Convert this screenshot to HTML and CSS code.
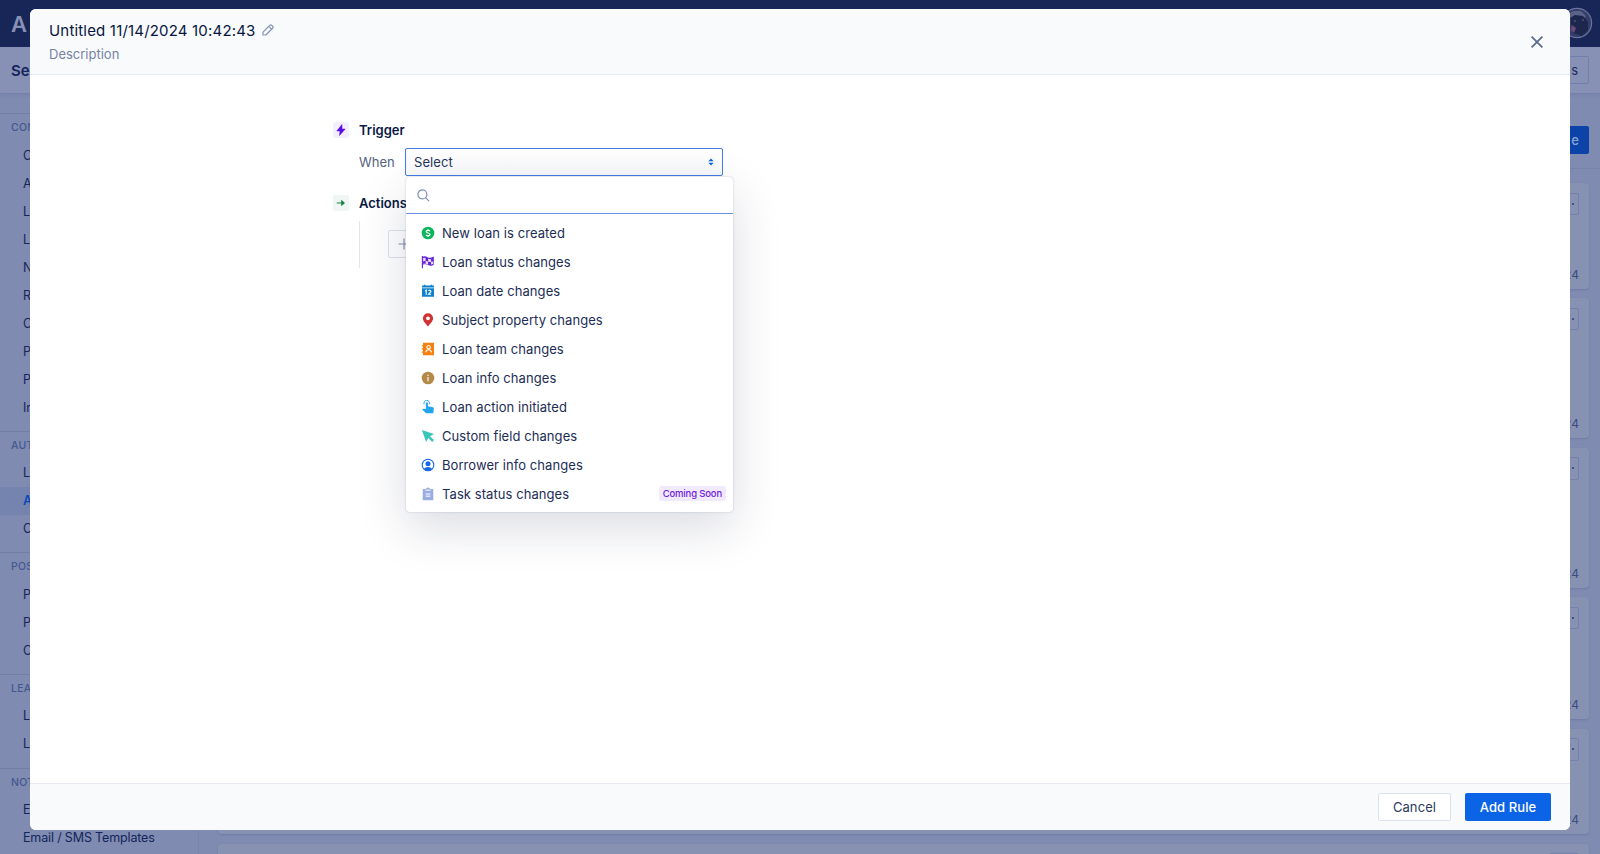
FILE: index.html
```
<!DOCTYPE html>
<html lang="en">
  <head>
    <title>Add Rule</title>
    <meta charset="utf-8" />
    <link rel="stylesheet" href="styles.css">
  </head>
  <body>
    <div class="app">
      <header class="topbar">
        <div class="logo">A</div>
        <svg class="avatar" viewBox="0 0 32 32">
          <circle cx="16" cy="16" r="14.6" fill="#343d67" stroke="#69759f" stroke-width="1.2" />
          <path d="M8 7l4-3 8 0 5 5-2 3-4-3-7 1-4 6z" fill="#59638a" />
          <path d="M9 11l5-3 8 1 5 6 0 8-6 6-9-3z" fill="#1d264d" />
          <path d="M13 14h2M21 13h2" stroke="#5d688f" fill="none" />
          <path d="M11 18l4 3-2 5-3-3z" fill="#704a76" />
        </svg>
      </header>
      <div class="subbar">
        <div class="subbar-title">Se</div>
        <button class="ghost-button">s</button>
      </div>
      <div class="page">
        <nav class="sidebar">
          <section>
            <h4>CON</h4>
            <a>C</a><a>A</a><a>L</a><a>L</a><a>N</a><a>R</a><a>C</a><a>P</a><a>P</a><a>In</a>
          </section>
          <section>
            <h4>AUT</h4>
            <a>L</a><a class="active">A</a><a>C</a>
          </section>
          <section>
            <h4>POS</h4>
            <a>P</a><a>P</a><a>C</a>
          </section>
          <section>
            <h4>LEA</h4>
            <a>L</a><a>L</a>
          </section>
          <section>
            <h4>NOT</h4>
            <a>E</a><a>Email / SMS Templates</a>
          </section>
        </nav>
        <main class="content">
          <div class="toolbar"><button class="create-button">e</button></div>
          <div class="rules">
            <div class="rule rule-short"><span class="more"></span><span>24</span></div>
            <div class="rule rule-tall"><span class="more"></span><span>24</span></div>
            <div class="rule rule-tall"><span class="more"></span><span>24</span></div>
            <div class="rule rule-mid"><span class="more"></span><span>24</span></div>
            <div class="rule rule-short"><span class="more"></span><span>24</span></div>
            <div class="rule rule-short"><span class="more"></span></div>
          </div>
        </main>
      </div>
    </div>

    <div class="modal">
      <div class="modal-header">
        <div>
          <div class="modal-title">
            <span>Untitled 11/14/2024 10:42:43</span>
            <svg width="12" height="12" viewBox="0 0 12 12" fill="none" stroke="#8292b5" stroke-width="1.2" stroke-linejoin="round">
              <path d="M1 8.2L8 1.2Q8.7.5 9.5 1.2L10.8 2.5Q11.5 3.3 10.8 4L3.8 11H1zM6.8 2.4l2.8 2.8" />
            </svg>
          </div>
          <div class="modal-description">Description</div>
        </div>
        <svg class="close" width="12" height="12" viewBox="0 0 12 12" stroke="#5b6b8c" stroke-width="1.8">
          <path d="M.6.6l10.8 10.8M11.4.6L.6 11.4" />
        </svg>
      </div>

      <div class="modal-body">
        <div class="step">
          <span class="step-icon trigger-icon">
            <svg width="10" height="12" viewBox="0 0 10 12"><path d="M6 .5L.8 7H4L3.5 11.5 9.2 5H6z" fill="#5a0be0" stroke="#5a0be0" stroke-width=".5" /></svg>
          </span>
          <h3>Trigger</h3>
        </div>
        <div class="when">
          <label>When</label>
          <div class="select">
            <span>Select</span>
            <svg width="6" height="8" viewBox="0 0 6 8" fill="#0b5fe6"><path d="M3 .4L5.6 3.2H.4zM3 7.6L.4 4.8h5.2z" /></svg>
            <div class="dropdown">
              <div class="search">
                <svg width="13" height="13" viewBox="0 0 13 13" fill="none" stroke="#7d90b6" stroke-width="1.2" stroke-linecap="round">
                  <circle cx="5.4" cy="5.4" r="4.5" /><path d="M8.8 8.8l3 3" />
                </svg>
              </div>
              <ul>
                <li>
                  <svg viewBox="0 0 14 14"><circle cx="7" cy="7" r="6.3" fill="#0cb45c" /><path d="M9 5.2Q8.6 4.3 7 4.3 5.1 4.3 5.1 5.6 5.1 6.7 7 7 9 7.3 9 8.5 9 9.8 7 9.8 5.3 9.8 4.9 8.7M7 3v1.3M7 9.8V11" fill="none" stroke="#fff" stroke-width="1.2" /></svg>
                  New loan is created
                </li>
                <li>
                  <svg viewBox="0 0 14 14"><path d="M1.4 1v12.2" stroke="#6420d4" stroke-width="1.1" /><path d="M1.7 1.8Q4 .7 6.5 2.2T12.8 1.5V9.8Q10 11.4 7.2 10T1.7 10z" fill="#6420d4" /><path d="M2.1 3.1l2.5-.4v3l2.5 1v-3l3 .5v2.7l-3-.2v2.8L4.6 8.8V5.7l-2.5.8zM10 6.8l2.2-.3v2.6l-2.2.5zM2.1 8.8l2.4-.1.1.7-2.5.2z" fill="#fff" opacity=".85" /></svg>
                  Loan status changes
                </li>
                <li>
                  <svg viewBox="0 0 14 14"><path d="M1 1.5h2V.7h1.4v.8h5.2V.7H11v.8h2v2.1H1zM1 4.3h12v8.5H1z" fill="#0f80cb" /><path d="M4.1 7l1.1-.8v4.6M7.6 7q.2-.8 1.2-.8 1.1 0 1.1 1 0 .7-.9 1.5L7.6 10.2h2.5" fill="none" stroke="#fff" stroke-width="1.1" /></svg>
                  Loan date changes
                </li>
                <li>
                  <svg viewBox="0 0 14 14"><path d="M7 13.5C5.5 11.2 1.9 8.2 1.9 5.4A5.1 5.1 0 0 1 12.1 5.4C12.1 8.2 8.5 11.2 7 13.5z" fill="#d33232" /><circle cx="7" cy="5.3" r="1.9" fill="#fff" /></svg>
                  Subject property changes
                </li>
                <li>
                  <svg viewBox="0 0 14 14"><path d="M2 .8h11v12.4H2v-2.5H.8V9.4H2V7.7H.8V6.3H2V4.6H.8V3.3H2z" fill="#f6800d" /><circle cx="7.6" cy="5.2" r="1.7" fill="none" stroke="#fff" stroke-width="1.1" /><path d="M4.8 10.4Q5 7.7 7.6 7.7t2.8 2.7" fill="none" stroke="#fff" stroke-width="1.1" /></svg>
                  Loan team changes
                </li>
                <li>
                  <svg viewBox="0 0 14 14"><circle cx="7" cy="7" r="6.3" fill="#b38a48" /><path d="M7 6v4.2M7 3.7v1.4" stroke="#f1e8d8" stroke-width="1.4" /></svg>
                  Loan info changes
                </li>
                <li>
                  <svg viewBox="0 0 14 14"><path d="M4.9 9V3.3a1 1 0 0 1 2 0V6.3L12 7.2Q13 7.5 12.8 8.6L12.3 13.3H5.1L1.2 9.6Q1.7 8.5 3 8.7z" fill="#22a4f0" /><path d="M3.1 4.4A2.9 2.9 0 1 1 8.6 4.1" fill="none" stroke="#22a4f0" stroke-width="1" /></svg>
                  Loan action initiated
                </li>
                <li>
                  <svg viewBox="0 0 14 14"><path d="M.9.9L13 5 9 7.2l4 3.9-1.8 1.8-3.9-4L5.1 13z" fill="#3bc6b9" /></svg>
                  Custom field changes
                </li>
                <li>
                  <svg viewBox="0 0 14 14"><circle cx="7" cy="7" r="5.8" fill="none" stroke="#1767e8" stroke-width="1.1" /><circle cx="7" cy="5.8" r="2.5" fill="#1767e8" /><path d="M2.8 11Q4.2 9 7 9.1t4.2 1.9Q9.4 12.9 7 12.9T2.8 11z" fill="#1767e8" /></svg>
                  Borrower info changes
                </li>
                <li>
                  <svg viewBox="0 0 14 14"><path d="M1.7 1.9h3Q5.2.4 7 .4t2.3 1.5h3v11.4H1.7z" fill="#9aaee2" /><path d="M4.5 3.2h5M4.7 7h4.6M4.7 9.2h4.6" stroke="#fff" stroke-width="1" /></svg>
                  Task status changes
                  <span class="badge">Coming Soon</span>
                </li>
              </ul>
            </div>
          </div>
        </div>
        <div class="step actions">
          <span class="step-icon action-icon">
            <svg width="10" height="10" viewBox="0 0 10 10"><path d="M.8 5H6" stroke="#158443" stroke-width="1.1" /><path d="M5.2 1.7L9 5 5.2 8.3z" fill="#158443" /></svg>
          </span>
          <h3>Actions</h3>
        </div>
        <div class="action-list">
          <button class="plus-button">
            <svg width="12" height="12" viewBox="0 0 12 12" stroke="#8492b2" stroke-width="1.2"><path d="M6 .5v11M.5 6h11" /></svg>
          </button>
        </div>
      </div>

      <div class="modal-footer">
        <button class="cancel">Cancel</button>
        <button class="add">Add Rule</button>
      </div>
    </div>
  </body>
</html>
```
FILE: styles.css
```
* {
  box-sizing: border-box;
}

body {
  margin: 0;
  height: 854px;
  overflow: hidden;
  position: relative;
  font-family: Inter, "Liberation Sans", sans-serif;
  font-size: 13px;
  color: #14234f;
  background: #7f8bb1;
}

button {
  font: inherit;
  letter-spacing: inherit;
}

svg {
  flex: none;
}

.app {
  height: 854px;
  overflow: hidden;
  display: flex;
  flex-direction: column;
}

.topbar {
  flex: none;
  height: 47px;
  padding: 0 7px 0 11px;
  display: flex;
  align-items: center;
  justify-content: space-between;
  background: #182557;
}

.logo {
  font-size: 22px;
  font-weight: 600;
  color: #8791b5;
}

.avatar {
  width: 32px;
  height: 32px;
  margin-bottom: 1px;
}

.subbar {
  flex: none;
  height: 46px;
  padding: 0 11px 0 11px;
  display: flex;
  align-items: center;
  justify-content: space-between;
  background: #8791b5;
  box-shadow: 0 1px 4px rgba(50, 65, 120, 0.2);
}

.subbar-title {
  font-size: 15px;
  font-weight: 600;
  color: #14245c;
}

.ghost-button {
  width: 70px;
  height: 28px;
  padding: 0 10px;
  text-align: right;
  color: #1d2d60;
  background: none;
  border: 1px solid #7080aa;
  border-radius: 2px;
}

.page {
  flex: 1;
  min-height: 0;
  display: flex;
}

.sidebar {
  flex: none;
  width: 199px;
  padding-top: 20.3px;
  border-right: 1px solid #7985ac;
}

.sidebar section {
  border-top: 1px solid #717ea8;
  padding-bottom: 9.3px;
}

.sidebar h4 {
  margin: 0;
  padding-left: 11px;
  height: 27.3px;
  line-height: 27px;
  font-size: 10.5px;
  font-weight: 500;
  letter-spacing: 0.2px;
  color: #445890;
}

.sidebar a {
  display: block;
  height: 28px;
  line-height: 28px;
  padding-left: 23px;
  font-size: 12.5px;
  letter-spacing: -0.15px;
  color: #14255a;
}

.sidebar .active {
  background: #7584af;
  color: #0c45b5;
  font-weight: 600;
}

.content {
  flex: 1;
}

.toolbar {
  height: 76px;
  padding: 33px 11px 0;
  border-bottom: 1px solid #7783aa;
  text-align: right;
}

.create-button {
  width: 70px;
  height: 28px;
  padding: 0 10px;
  text-align: right;
  font-weight: 500;
  color: #8ba4d6;
  background: #0c43a8;
  border: 0;
  border-radius: 2px;
}

.rules {
  padding: 14px 11px 0 19px;
  display: flex;
  flex-direction: column;
  gap: 9.5px;
}

.rule {
  padding: 9.5px 10px 7px;
  display: flex;
  flex-direction: column;
  justify-content: space-between;
  align-items: flex-end;
  font-size: 12px;
  color: #3c4c80;
  background: #8791b2;
  border-radius: 4px;
  box-shadow: 0 1px 2px rgba(50, 65, 120, 0.2);
}

.rule-short {
  height: 105.7px;
}

.rule-tall {
  height: 140px;
}

.rule-mid {
  height: 122px;
}

.more {
  display: flex;
  align-items: center;
  justify-content: flex-end;
  width: 30px;
  height: 22.5px;
  padding-right: 4px;
  border: 1px solid #7481aa;
  border-radius: 2px;
}

.more::after {
  content: "";
  width: 2px;
  height: 2px;
  border-radius: 50%;
  background: #2c3d77;
}

.modal {
  position: absolute;
  top: 9px;
  left: 30px;
  width: 1540px;
  height: 821px;
  display: flex;
  flex-direction: column;
  overflow: hidden;
  background: #fff;
  border-radius: 6px;
}

.modal-header {
  flex: none;
  height: 66px;
  padding: 10px 27px 0 19px;
  display: flex;
  justify-content: space-between;
  background: #f9fafc;
  border-bottom: 1px solid #e4e8f1;
}

.modal-title {
  display: flex;
  align-items: center;
  gap: 6px;
  height: 22px;
  font-size: 15px;
  letter-spacing: 0.18px;
  color: #061641;
}

.modal-description {
  height: 22px;
  line-height: 26px;
  color: #7583a2;
}

.close {
  margin-top: 17px;
}

.modal-body {
  flex: 1;
  padding: 46px 0 0 303px;
}

.step {
  display: flex;
  align-items: center;
  gap: 10px;
  height: 18px;
}

.step h3 {
  margin: 0;
  font-size: 13px;
  font-weight: 600;
  color: #0a1844;
}

.step-icon {
  width: 16px;
  height: 16px;
  display: flex;
  align-items: center;
  justify-content: center;
  border-radius: 2px;
}

.trigger-icon {
  background: #f4effe;
}

.action-icon {
  background: #eff6f3;
}

.when {
  display: flex;
  align-items: center;
  margin: 9px 0 0 26px;
  height: 28px;
}

.when label {
  width: 46px;
  color: #53627f;
}

.select {
  position: relative;
  width: 318px;
  height: 28px;
  padding: 0 8px;
  display: flex;
  align-items: center;
  justify-content: space-between;
  letter-spacing: 0.1px;
  color: #26365c;
  background: linear-gradient(#fff, #f8f9fb);
  border: 1px solid #447be4;
  border-radius: 2px;
}

.dropdown {
  position: absolute;
  z-index: 2;
  top: 28px;
  left: 0;
  width: 327px;
  height: 335px;
  background: #fff;
  border-radius: 4px;
  box-shadow: 0 0 2px rgba(50, 60, 100, 0.28), 0 16px 48px rgba(30, 40, 75, 0.16);
}

.search {
  height: 37px;
  padding: 12px 11px 0;
  border-bottom: 1px solid #6c91e2;
}

.search svg {
  display: block;
}

.dropdown ul {
  margin: 0;
  padding: 4px 0 0;
  list-style: none;
}

.dropdown li {
  height: 29px;
  padding: 0 7px 0 15px;
  display: flex;
  align-items: center;
  gap: 7px;
  letter-spacing: 0.07px;
  color: #1c2d55;
}

.dropdown li svg {
  width: 14px;
  height: 14px;
}

.badge {
  margin-left: auto;
  height: 15px;
  padding: 0 4px;
  line-height: 15px;
  font-size: 9.5px;
  font-weight: 500;
  letter-spacing: -0.15px;
  color: #7022e2;
  background: #f1eafd;
  border-radius: 3px;
}

.actions {
  margin-top: 18px;
}

.action-list {
  height: 47px;
  margin: 9px 0 0 26px;
  padding: 9px 0 0 28px;
  border-left: 1px solid #dfe4ed;
}

.plus-button {
  display: flex;
  align-items: center;
  width: 120px;
  height: 28px;
  padding: 0 9px;
  background: #fff;
  border: 1px solid #dce2ed;
  border-radius: 2px;
}

.modal-footer {
  flex: none;
  height: 47px;
  padding: 9px 19px 0;
  display: flex;
  justify-content: flex-end;
  gap: 14px;
  background: #f9fafc;
  border-top: 1px solid #e7eaf1;
}

.modal-footer button {
  height: 28px;
  padding: 0;
  letter-spacing: 0.1px;
  border-radius: 2px;
}

.cancel {
  width: 73px;
  color: #2b3b60;
  background: #fff;
  border: 1px solid #dbe1ed;
}

.add {
  width: 86px;
  font-weight: 500;
  color: #fff;
  background: #0b63e5;
  border: 0;
}
```
